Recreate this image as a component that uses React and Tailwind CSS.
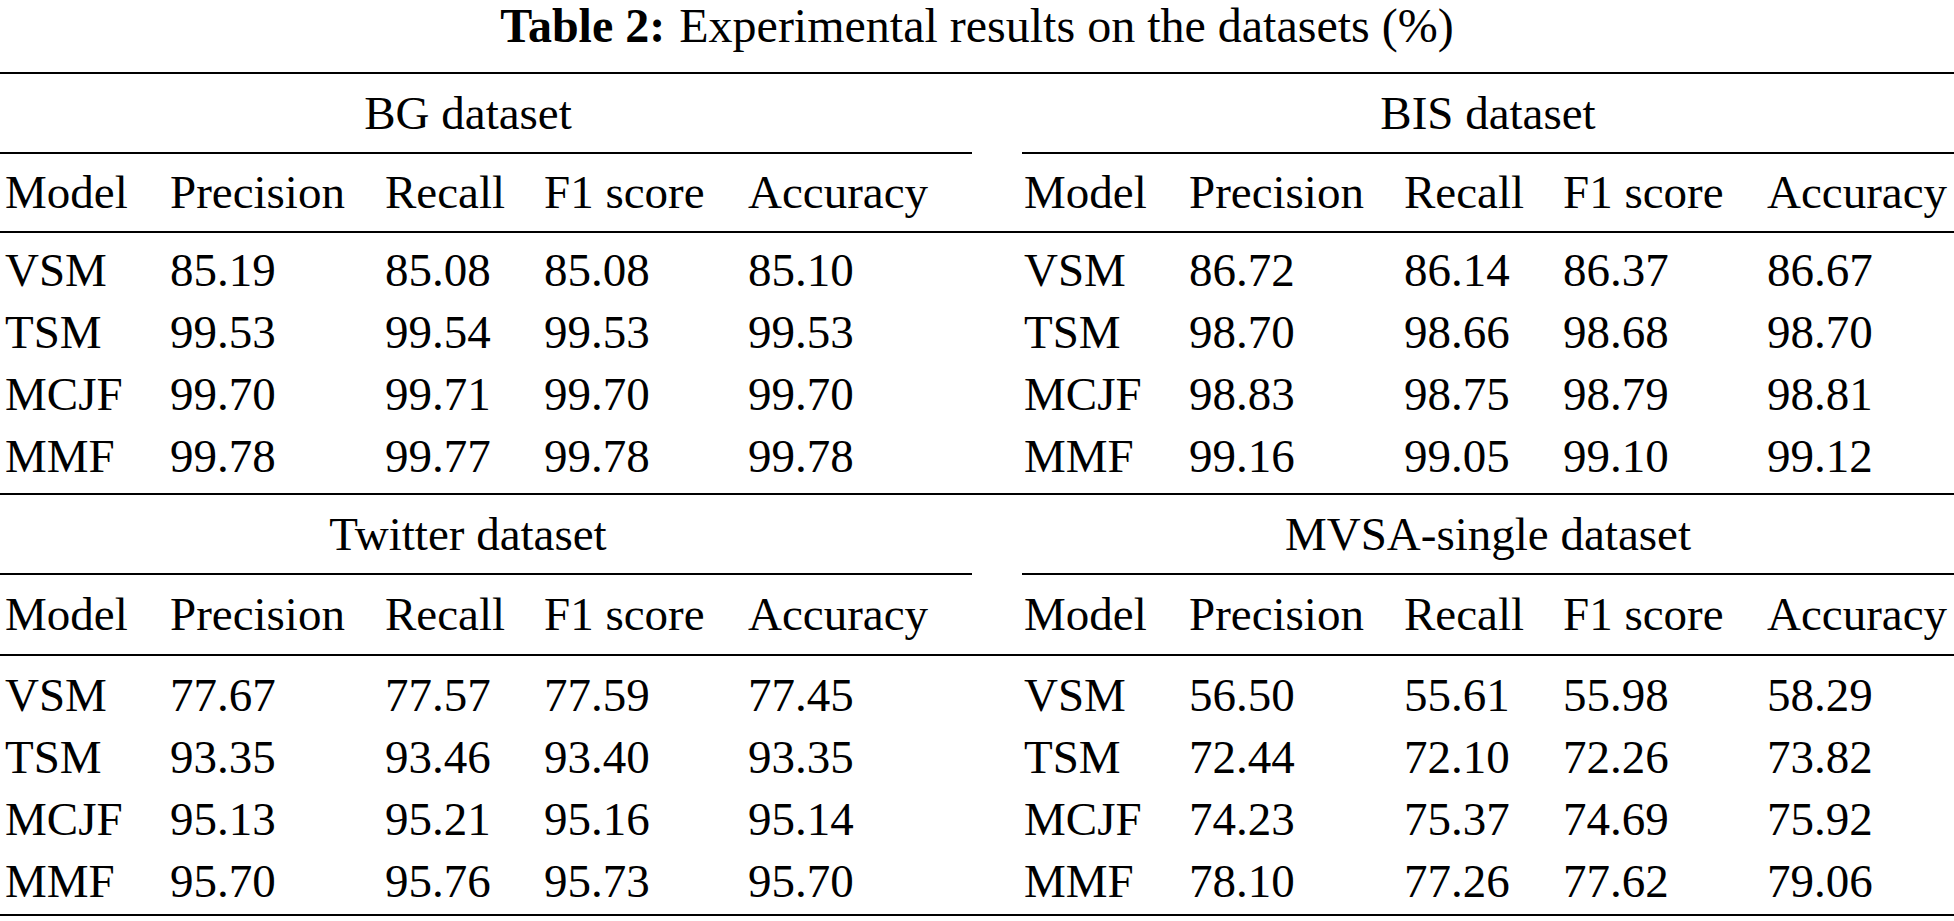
import React from 'react';

const sections = [
  {
    left: 'BG dataset',
    right: 'BIS dataset',
    leftRows: [
      ['VSM', '85.19', '85.08', '85.08', '85.10'],
      ['TSM', '99.53', '99.54', '99.53', '99.53'],
      ['MCJF', '99.70', '99.71', '99.70', '99.70'],
      ['MMF', '99.78', '99.77', '99.78', '99.78'],
    ],
    rightRows: [
      ['VSM', '86.72', '86.14', '86.37', '86.67'],
      ['TSM', '98.70', '98.66', '98.68', '98.70'],
      ['MCJF', '98.83', '98.75', '98.79', '98.81'],
      ['MMF', '99.16', '99.05', '99.10', '99.12'],
    ],
  },
  {
    left: 'Twitter dataset',
    right: 'MVSA-single dataset',
    leftRows: [
      ['VSM', '77.67', '77.57', '77.59', '77.45'],
      ['TSM', '93.35', '93.46', '93.40', '93.35'],
      ['MCJF', '95.13', '95.21', '95.16', '95.14'],
      ['MMF', '95.70', '95.76', '95.73', '95.70'],
    ],
    rightRows: [
      ['VSM', '56.50', '55.61', '55.98', '58.29'],
      ['TSM', '72.44', '72.10', '72.26', '73.82'],
      ['MCJF', '74.23', '75.37', '74.69', '75.92'],
      ['MMF', '78.10', '77.26', '77.62', '79.06'],
    ],
  },
];

const headers = ['Model', 'Precision', 'Recall', 'F1 score', 'Accuracy'];

// one row of five cells, shared by header and data rows
const Cells = ({ cells, side }) => (
  <div
    className={`grid grid-cols-[165px_215px_159px_204px_1fr] whitespace-nowrap ${
      side === 'left' ? 'w-[972px] pl-[5px]' : 'flex-1 pl-[2px]'
    }`}
  >
    {cells.map((c, i) => (
      <span key={i}>{c}</span>
    ))}
  </div>
);

const Rule = () => <div className="h-[2px] bg-black" />;

const Section = ({ s, lower }) => (
  <div>
    {/* dataset names */}
    <div className="flex gap-[50px] h-[78px] leading-[78px]">
      <div className="w-[972px] pr-[36px] text-center">{s.left}</div>
      <div className="flex-1 text-center">{s.right}</div>
    </div>
    <div className="flex gap-[50px]">
      <div className="w-[972px] h-[2px] bg-black" />
      <div className="flex-1 h-[2px] bg-black" />
    </div>

    {/* column headers */}
    <div
      className={`flex gap-[50px] ${
        lower ? 'h-[79px] leading-[79px]' : 'h-[77px] leading-[77px]'
      }`}
    >
      <Cells cells={headers} side="left" />
      <Cells cells={headers} side="right" />
    </div>
    <Rule />

    {/* results */}
    <div className={lower ? 'pt-[8px] pb-[2px]' : 'py-[6px]'}>
      {s.leftRows.map((row, i) => (
        <div key={i} className="flex gap-[50px] h-[62px] leading-[62px]">
          <Cells cells={row} side="left" />
          <Cells cells={s.rightRows[i]} side="right" />
        </div>
      ))}
    </div>
    <Rule />
  </div>
);

export default function App() {
  return (
    <div className="w-[1954px] h-[921px] bg-white text-black overflow-hidden font-['Liberation_Serif',serif] text-[47px]">
      <div className="h-[72px] leading-[52px] text-center whitespace-nowrap text-[48px]">
        <span className="font-bold">Table 2:</span>
        <span className="ml-[14px]">Experimental results on the datasets (%)</span>
      </div>
      <Rule />
      {sections.map((s, i) => (
        <Section key={i} s={s} lower={i === 1} />
      ))}
    </div>
  );
}
